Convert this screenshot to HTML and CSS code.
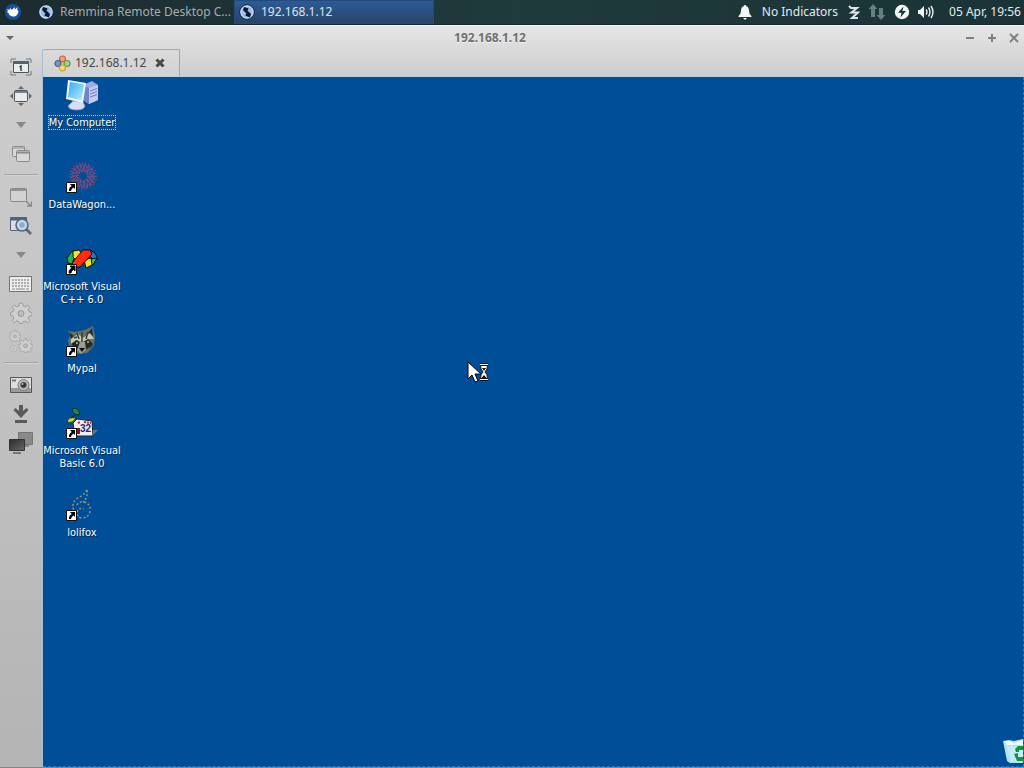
FILE: index.html
```html
<!DOCTYPE html>
<html lang="en">
<head>
<meta charset="utf-8">
<title>192.168.1.12</title>
<link rel="stylesheet" href="styles.css">
</head>
<body>
<svg class="defs" aria-hidden="true">
  <defs>
    <linearGradient id="screen" x1="0" y1="0" x2="1" y2="1"><stop offset="0" stop-color="#3aa6ee"/><stop offset="1" stop-color="#b4f2fb"/></linearGradient>
    <linearGradient id="dark" x1="0" y1="0" x2="1" y2="1"><stop offset="0" stop-color="#2d2d2d"/><stop offset="1" stop-color="#666"/></linearGradient>
    <symbol id="remmina" viewBox="0 0 16 16"><circle cx="8" cy="8" r="7.300" fill="#9fbfe8" stroke="#14233c"/><circle cx="8" cy="8" r="6" fill="none" stroke="#cfe1f8"/><path d="M5 3l5 1.500L8.500 6.500 12 10l-1 3.500-5-2L7.500 9.500 4 6z" fill="#0c1730"/><path d="M9 4l1.500.5L9 6.500M5 11l2 1" fill="none" stroke="#7fa3d2"/></symbol>
    <symbol id="shortcut" viewBox="0 0 11 11"><path d="M.5.500h10v10H.5z" fill="#fff" stroke="#111"/><path d="M4 2h5v5L7.500 5.500Q5 7 5 9H3Q2.500 6 5.800 4z" fill="#000"/></symbol>
    <symbol id="gear" viewBox="0 0 22 22"><path d="M9.500 1h3l.6 3 2 .9 2.600-1.700 2.100 2.100L18.200 8l.8 1.800 3 .7v3l-3 .7-.9 2 1.700 2.500-2.100 2.100-2.600-1.700-2 .8-.6 1.600h-3l-.6-1.800-2-.8-2.600 1.700-2.100-2.100L3.900 16 3 14l-2.500-.6v-3L3 9.800 3.900 8 2.200 5.300l2.100-2.100 2.600 1.700 2-.9z" fill="#cfcfcf" stroke="#9c9c9c"/><circle cx="11" cy="11.500" r="3" fill="#bdbdbd" stroke="#989898"/></symbol>
  </defs>
</svg>

<header class="panel">
  <button class="menu" aria-label="Applications"><svg width="16" height="16" viewBox="0 0 16 16"><circle cx="8" cy="8" r="8" fill="#14509c"/><path d="M2 5l2.500 1L5 4l2 2 2.500-3 .5 2.500L12.500 3l-.3 3 1.300 1Q13 11 10 12.500q-3.500.5-5.500-1.500Q4 9 2 8l1-1z" fill="#fff"/></svg></button>
  <nav class="tasks">
    <button class="task"><svg width="16" height="16"><use href="#remmina"/></svg><span>Remmina Remote Desktop C...</span></button>
    <button class="task active"><svg width="16" height="16"><use href="#remmina"/></svg><span>192.168.1.12</span></button>
  </nav>
  <div class="tray">
    <svg width="14" height="16" viewBox="0 0 14 16" fill="#f2f7f7"><path d="M7 1q1.200 0 1.300 1.300Q11 3 11 7q0 3 2.500 5v1H.5v-1Q3 10 3 7q0-4 2.700-4.700Q5.800 1 7 1zM5 14h4l-2 2z"/></svg>
    <span class="indicators">No Indicators</span>
    <svg width="12" height="16" viewBox="0 0 12 16"><path d="M1 2l2 2h6L3.500 8.500H10L4 14h6" fill="none" stroke="#dce6e6" stroke-width="2"/></svg>
    <svg width="18" height="16" viewBox="0 0 18 16" fill="#647f80"><path d="M5 0l4.500 5H7v8H3V5H.5zM13 16l-4.500-5H11V4h4v7h2.500z"/></svg>
    <svg width="16" height="16" viewBox="0 0 16 16"><circle cx="8" cy="8" r="7.200" fill="#f2f7f7"/><path d="M9.500 2.500L4 8.800h3.500L6.500 13.500 12 7H8.500z" fill="#1c3335"/></svg>
    <svg width="16" height="16" viewBox="0 0 16 16"><path d="M0 6h2l4-4v12l-4-4H0z" fill="#f2f7f7"/><path d="M8 5.500q2 2.500 0 5M10.500 3.500q3 4.500 0 9M13 2q4 6 0 12" fill="none" stroke="#e8efef" stroke-width="1.400"/></svg>
    <time class="clock">05 Apr, 19:56</time>
  </div>
</header>

<main class="window">
  <div class="titlebar">
    <button aria-label="Window menu"><svg width="10" height="6"><path d="M1 1h8L5 5z" fill="#666"/></svg></button>
    <h1>192.168.1.12</h1>
    <div class="controls">
      <button aria-label="Minimize"><svg width="10" height="10"><path d="M1 5h8" stroke="#808080" stroke-width="2"/></svg></button>
      <button aria-label="Maximize"><svg width="10" height="10"><path d="M1 5h8M5 1v8" stroke="#808080" stroke-width="2"/></svg></button>
      <button aria-label="Close"><svg width="10" height="10"><path d="M1 1l8 8M9 1L1 9" stroke="#808080" stroke-width="2"/></svg></button>
    </div>
  </div>
  <div class="body">
    <aside class="toolbar">
      <button aria-label="Fit window"><svg width="22" height="18" viewBox="0 0 22 18"><path d="M1 5V1h5M16 1h5v4M21 13v4h-5M6 17H1v-4" fill="none" stroke="#777"/><path d="M3.500 3.500h15v11h-15z" fill="#e9edef" stroke="#555"/><path d="M3 3h16v3H3z" fill="#59636b"/><path d="M9.500 9L11 8v5" fill="none" stroke="#333" stroke-width="1.400"/></svg></button>
      <button aria-label="Fullscreen"><svg width="22" height="20" viewBox="0 0 22 20"><path d="M11 0l3 3H8zM11 20l3-3H8zM0 10l3-3v6zM22 10l-3-3v6z" fill="#666"/><rect x="4.500" y="4.500" width="13" height="11" rx="1" fill="#e8ecef" stroke="#505050"/><path d="M5 5h12v2H5z" fill="#77818a"/></svg></button>
      <button aria-label="Fullscreen options"><svg width="10" height="6"><path d="M0 0h10L5 6z" fill="#888"/></svg></button>
      <button aria-label="Switch tab pages"><svg width="20" height="18" viewBox="0 0 20 18" fill="#d8d8d8" stroke="#8a8a8a"><rect x="1.500" y="1.500" width="12" height="10" rx="1"/><path d="M2 3h11"/><rect x="5.500" y="5.500" width="13" height="11" rx="1"/><path d="M6 7.500h12" stroke-width="2"/></svg></button>
      <hr>
      <button aria-label="Dynamic resolution"><svg width="22" height="20" viewBox="0 0 22 20"><rect x=".5" y="1.500" width="16" height="13" rx="1" fill="#d2d2d2" stroke="#888"/><path d="M1 3h15" stroke="#929292" stroke-width="2"/><path d="M16 14l5 5M17 19h4.500v-4.500" fill="none" stroke="#888" stroke-width="1.500"/></svg></button>
      <button aria-label="Scaled mode"><svg width="22" height="20" viewBox="0 0 22 20"><path d="M.5 1.500h16v13H.5z" fill="#d9dfe5" stroke="#5b6167"/><path d="M1 3h15" stroke="#526373" stroke-width="3"/><path d="M16 13l5 5" stroke="#616a75" stroke-width="3"/><circle cx="12" cy="9" r="6" fill="#b9d0e8" stroke="#50657d" stroke-width="1.500"/><circle cx="12" cy="9" r="3.500" fill="#8dadcf" stroke="#dce9f5"/></svg></button>
      <button aria-label="Scaling options"><svg width="10" height="6"><path d="M0 0h10L5 6z" fill="#888"/></svg></button>
      <button aria-label="Grab keyboard"><svg width="23" height="18" viewBox="0 0 23 18"><path d="M.5 1.500h22v15H.5z" fill="#ededed" stroke="#737373"/><path d="M3 5h17M3 8h17M3 11h17" stroke="#999" stroke-width="1.500" stroke-dasharray="2 1"/><path d="M3 14h3M7 14h9M17 14h3" stroke="#888"/></svg></button>
      <button aria-label="Preferences"><svg width="22" height="22"><use href="#gear"/></svg></button>
      <button aria-label="Tools"><svg width="24" height="24"><use href="#gear" width="12" height="12"/><use href="#gear" x="9" y="8" width="15" height="15"/><use href="#gear" x="1" y="15" width="7" height="7"/></svg></button>
      <hr>
      <button aria-label="Screenshot"><svg width="22" height="18" viewBox="0 0 22 18"><path d="M.5 1.500h21v15H.5z" fill="#ddd" stroke="#555"/><path d="M1 14h20" stroke="#999" stroke-width="4"/><path d="M2 3.500h4v2H2z" fill="#777"/><circle cx="13.500" cy="9" r="5.500" fill="#c1c1c1" stroke="#777"/><circle cx="13.500" cy="9" r="3" fill="#333" stroke="#777"/><circle cx="12.500" cy="8" r="1" fill="#bbb"/></svg></button>
      <button aria-label="Minimize window"><svg width="16" height="18" viewBox="0 0 16 18"><path d="M6 0h4v6l3.500-3L15.500 5 8 13 .5 5l2-2L6 6zM2 15h12v3H2z" fill="#595959"/></svg></button>
      <button aria-label="Disconnect"><svg width="24" height="24" viewBox="0 0 24 24"><path d="M9.500 1.500h14v12h-14z" fill="#898989" stroke="#757575"/><path d="M13 15h7" stroke="#888" stroke-width="2"/><path d="M.5 8.500h15v11H.5z" fill="url(#dark)" stroke="#333"/><path d="M4 22h8" stroke="#777" stroke-width="2"/></svg></button>
    </aside>
    <section class="session">
      <div class="tabs">
        <div class="tab">
          <svg width="17" height="17" viewBox="0 0 17 17" stroke-width="1.200"><circle cx="8.500" cy="4" r="3" fill="#f3a174" stroke="#c8603b"/><circle cx="4" cy="8.500" r="3" fill="#8094b6" stroke="#435d91"/><circle cx="13" cy="8.500" r="3" fill="#a9cf82" stroke="#659346"/><circle cx="8.500" cy="13" r="3" fill="#f4de5d" stroke="#c8a62a"/></svg>
          <span>192.168.1.12</span>
          <button aria-label="Close tab"><svg width="10" height="10"><path d="M1.500 1.500l7 7M8.500 1.500l-7 7" stroke="#484848" stroke-width="3"/></svg></button>
        </div>
      </div>
      <div class="desktop">
        <a class="item selected" href="#"><svg width="34" height="32" viewBox="0 0 34 32"><path d="M18 6l9-4 6 4v15l-9 4-6-4z" fill="#9cabe0"/><path d="M18 6l6 3v16l-6-4z" fill="#6f83cb"/><path d="M24 9l9-3v15l-9 4z" fill="#c2c8ef"/><path d="M25 12l7-2.500M25 15l7-2.500M25 18l7-2.500" stroke="#727bb8"/><path d="M8 22l10 1 2 4q-1 4-8 4-8 0-9-4z" fill="#d8dcf6" stroke="#868dcc" stroke-width=".7"/><path d="M3 1l18 3-3 20L1 20z" fill="#edf6ff"/><path d="M5 3l14 2.500-2.500 16L3 18z" fill="url(#screen)"/></svg><span>My Computer</span></a>
        <a class="item" href="#"><svg width="32" height="32" viewBox="0 0 32 32" fill="none"><g stroke="#8a4468" stroke-width="2" stroke-dasharray="2 1"><circle cx="17" cy="15" r="5"/><circle cx="17" cy="15" r="9"/><circle cx="17" cy="15" r="13" stroke-dasharray="1 2"/></g><g stroke="#5e4f93" stroke-width="2" stroke-dasharray="3 1"><circle cx="17" cy="15" r="7"/><circle cx="17" cy="15" r="11"/></g><use href="#shortcut" y="21" width="11" height="11"/></svg><span>DataWagon...</span></a>
        <a class="item" href="#"><svg width="32" height="32" viewBox="0 0 32 32" stroke="#111"><path d="M1 15l5-7 4 2-4 11-4-1z" fill="#20b846"/><path d="M7 8l6-1 4 5-6 6-4-4z" fill="#ffdc28"/><path d="M24 7l5 3 3 6-4 1-6-6z" fill="#2673d0"/><path d="M31 15l-4 7-5 1 3-7z" fill="#35c54d"/><path d="M18 17l7-2 1 7-6 3z" fill="#ffdc28"/><path d="M6 20L17 7h7l2 4-12 13H8z" fill="#ff2b12"/><use href="#shortcut" y="21" width="11" height="11"/></svg><span>Microsoft Visual<br>C++ 6.0</span></a>
        <a class="item" href="#"><svg width="32" height="32" viewBox="0 0 32 32"><path d="M2 6l7 1 10-2 8-4 2 10-1 10-7 7-9 1-8-6-2-7 2-5z" fill="#687064"/><path d="M3 7l5 4-3 3zM26 3l1 8-5-3z" fill="#252c29"/><path d="M5 14l7-5 5 4 7-5 4 6-5 0-7 3-6-2-5 4z" fill="#c6c9bb"/><path d="M5 19l6-4 4 4 7-5 5 5-6 5-6 1-6-2z" fill="#202a27"/><path d="M14 17h5l1 8-5 4-4-4z" fill="#9b9f8f"/><path d="M13 23h6l-3 4z" fill="#101010"/><path d="M16 7v10M11 8l2 6M22 7l-2 7M23 23l4-3M8 13l3-1" stroke="#383f39" stroke-width="1.500"/><circle cx="11" cy="18" r="1" fill="#d8b95f"/><circle cx="22" cy="17" r="1" fill="#d8b95f"/><use href="#shortcut" y="21" width="11" height="11"/></svg><span>Mypal</span></a>
        <a class="item" href="#"><svg width="32" height="32" viewBox="0 0 32 32"><path d="M6 2q6-3 8 5-6 3-8-5z" fill="#26844a" stroke="#092f1e"/><path d="M1 15q1-6 9-4-3 6-9 4z" fill="#c7cf3b" stroke="#243917"/><path d="M5 11l4-3" stroke="#0a2c20"/><path d="M7 16l4-4 15 2 1 15H9z" fill="#eee" stroke="#222"/><path d="M27 23h5l-5 5z" fill="#687886"/><path d="M12 16l2-1M18 15l7 1" stroke="#b32734" stroke-width="2" stroke-dasharray="2 1"/><text class="badge" x="14" y="25">32</text><path d="M10 21h4v6h-4z" fill="#7b2020"/><use href="#shortcut" y="21" width="11" height="11"/></svg><span>Microsoft Visual<br>Basic 6.0</span></a>
        <a class="item" href="#"><svg width="32" height="32" viewBox="0 0 32 32"><path d="M21 1q-4 6-11 9-5 5-2 12M21 1q1 8-4 12M11 16q2-4 7-3 7 2 6 9-1 7-9 7-5-2-4-6 2-5 7-3" fill="none" stroke="#969a68" stroke-width="1.500" stroke-dasharray="2 2"/><use href="#shortcut" y="21" width="11" height="11"/></svg><span>lolifox</span></a>
        <svg class="pointer" width="22" height="22" viewBox="0 0 22 22"><path d="M1 1v17l4-4 3 7 3-1-3-7h6z" fill="#fff" stroke="#050505"/><path d="M13 3.500h8M13 18.500h8" stroke="#111" stroke-width="3"/><path d="M13.500 4.500h7q0 4-2.500 6.500 2.500 2 2.500 6.500h-7q0-4.500 2.500-6.500-2.500-2.500-2.500-6.500z" fill="#fff" stroke="#111"/><path d="M13 3.500h8M13 18.500h8" stroke="#fff"/><path d="M15 7h4l-2 3zM14.500 17l2.500-3 2.500 3z" fill="#111"/></svg>
        <svg class="trash" role="img" aria-label="Recycle Bin" width="20" height="26" viewBox="0 0 20 26"><path d="M0 3l6-1 5 1 9-2v24H7l-3-2z" fill="#aee4f4"/><path d="M1 3l5 0 5 2 9-3v5L4 7z" fill="#f2fcff"/><path d="M4 8l12 1 4 2v12H8z" fill="#c2edf8"/><path d="M12 11l3-3h5v4h-4v2h-3zM11 16l4-1v4h5v4h-6z" fill="#15933d"/></svg>
      </div>
    </section>
  </div>
</main>
</body>
</html>
```
FILE: styles.css
```css
* { box-sizing: border-box; }
body {
  margin: 0;
  min-height: 100vh;
  display: flex;
  flex-direction: column;
  font: 12px/16px "Noto Sans", "Open Sans", sans-serif;
  color: #484848;
}
button {
  margin: 0;
  padding: 0;
  border: 0;
  background: none;
  color: inherit;
  font: inherit;
  display: flex;
  align-items: center;
  justify-content: center;
}
svg { display: block; flex: none; }
.defs { position: absolute; width: 0; height: 0; }

.panel {
  height: 25px;
  display: flex;
  align-items: center;
  background: linear-gradient(90deg, #1c2b30, #203b3c 50%, #1a3336);
  border-bottom: 1px solid #14272a;
  color: #e3ebeb;
}
.menu { width: 26px; height: 24px; }
.tasks { display: flex; flex: 1; min-width: 0; padding-left: 8px; }
.task {
  width: 200px;
  height: 24px;
  padding: 0 4px;
  gap: 6px;
  justify-content: flex-start;
  color: #a5acae;
  white-space: nowrap;
}
.task.active {
  background: linear-gradient(#2c5b96, #29456a);
  border: 1px solid #244b7c;
  color: #dbe6f3;
}
.tray { display: flex; align-items: center; gap: 8px; padding-right: 3px; white-space: nowrap; }
.indicators { padding: 0 2px; }
.clock { padding-left: 7px; }

.window {
  flex: 1;
  display: flex;
  flex-direction: column;
  background: linear-gradient(#e6e6e6, #cdcdcd 50px, #b4b4b4);
  border-top: 1px solid #f5f5f5;
  border-bottom: 1px solid #858585;
}
.titlebar { height: 23px; display: flex; align-items: center; padding: 0 5px; }
.titlebar h1 {
  flex: 1;
  margin: 0;
  font-size: 12px;
  line-height: 16px;
  text-align: center;
  color: #707070;
  text-shadow: 0 1px #f2f2f2;
}
.controls { display: flex; gap: 12px; }

.body { flex: 1; display: flex; }
.toolbar { width: 43px; padding-top: 3px; border-right: 1px solid #a9bdd3; }
.toolbar button { width: 41px; height: 29px; }
.toolbar hr {
  height: 2px;
  margin: 6px 4px;
  border: 0;
  border-top: 1px solid #a4a4a4;
  border-bottom: 1px solid #d4d4d4;
}
.session { flex: 1; display: flex; flex-direction: column; min-width: 0; }
.tabs { height: 28px; display: flex; border-bottom: 1px solid #b9d3dc; }
.tab {
  display: flex;
  align-items: center;
  gap: 4px;
  padding: 0 14px 0 11px;
  border: 1px solid #a5a5a5;
  border-width: 1px 1px 0 0;
  border-radius: 2px 2px 0 0;
  background: linear-gradient(#dadada, #d2d2d2);
}
.tab button { margin-left: 5px; }

.desktop {
  flex: 1;
  position: relative;
  display: flex;
  flex-direction: column;
  align-items: flex-start;
  padding-top: 2px;
  background: #004e98;
  border: 1px dashed #3c71a4;
  border-width: 0 1px 1px 0;
}
.item {
  width: 78px;
  height: 82px;
  display: flex;
  flex-direction: column;
  align-items: center;
  gap: 5px;
  color: #fff;
  font: 11px/13px "DejaVu Sans Condensed", "DejaVu Sans", sans-serif;
  text-align: center;
  text-decoration: none;
  text-shadow: 1px 1px #00284f;
  white-space: nowrap;
}
.item.selected span { outline: 1px dotted #b4cbe0; }
.badge { font: bold 10px "Liberation Sans", sans-serif; fill: #27258b; text-shadow: none; }
.pointer { position: absolute; left: 424px; top: 284px; }
.trash { position: absolute; right: 0; bottom: 2px; }
```
